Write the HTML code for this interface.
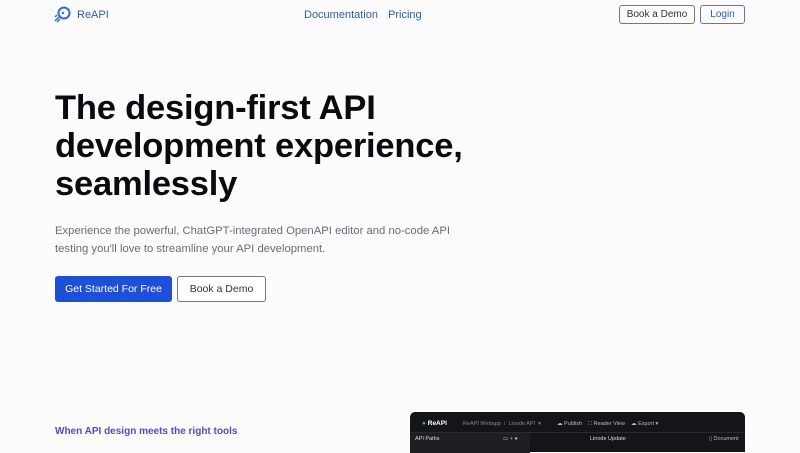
<!DOCTYPE html>
<html><head><style>
*{margin:0;padding:0;box-sizing:border-box}
body{width:800px;height:450px;overflow:hidden;background:#fcfcfd;font-family:"Liberation Sans",sans-serif;position:relative}
.a{position:absolute}
.nav{color:#2f5bb0;font-size:11px}
h1{position:absolute;left:55px;top:89px;font-size:34.5px;line-height:38px;font-weight:600;color:#0b0b0f;letter-spacing:-0.2px}
p{position:absolute;left:55px;top:222px;width:420px;font-size:11.3px;line-height:18px;color:#6b6b75}
.btn{position:absolute;border-radius:3px;font-size:10.5px;display:flex;align-items:center;justify-content:center}
</style></head><body>
<svg class="a" style="left:54px;top:6px" width="17" height="17" viewBox="0 0 17 17"><circle cx="10" cy="7" r="5.5" fill="none" stroke="#2f6fd0" stroke-width="2"/><circle cx="9" cy="7" r="1.2" fill="#2f6fd0"/><path d="M5 11 L1 15 M6 13 L3 16 M3 9 L1 11" stroke="#2f6fd0" stroke-width="1.5"/></svg>
<div class="a nav" style="left:77px;top:9px">ReAPI</div>
<div class="a nav" style="left:304px;top:9px">Documentation</div>
<div class="a nav" style="left:388px;top:9px">Pricing</div>
<div class="btn" style="left:619px;top:5px;width:76px;height:19px;border:1px solid #777;color:#333;font-size:10px">Book a Demo</div>
<div class="btn" style="left:700px;top:5px;width:45px;height:19px;border:1px solid #5a7bb5;color:#2f5bb0;font-size:10px">Login</div>
<h1>The design-first API<br>development experience,<br>seamlessly</h1>
<p>Experience the powerful, ChatGPT-integrated OpenAPI editor and no-code API testing you'll love to streamline your API development.</p>
<div class="btn" style="left:55px;top:276px;width:117px;height:26px;background:#1d4fd8;color:#fff">Get Started For Free</div>
<div class="btn" style="left:177px;top:276px;width:89px;height:26px;border:1px solid #777;background:#fff;color:#333">Book a Demo</div>
<div class="a" style="left:55px;top:426px;font-size:10px;font-weight:600;color:#5b46c8">When API design meets the right tools</div>
<div class="a" style="left:410px;top:412px;width:335px;height:40px;background:#141518;border-radius:5px 5px 0 0;font-size:5.5px;color:#bbb">
 <div class="a" style="left:12px;top:8px;color:#fff;font-weight:bold;font-size:6.5px"><span style="color:#4a9de8">●</span> ReAPI</div>
 <div class="a" style="left:53px;top:9px;color:#888">ReAPI Webapp &nbsp;/&nbsp; Linode API &nbsp;▾</div>
 <div class="a" style="left:147px;top:9px">☁ Publish &nbsp;&nbsp; ⛶ Reader View &nbsp;&nbsp; ☁ Export ▾</div>
 <div class="a" style="left:0;top:20px;width:335px;height:1px;background:#2a2b30"></div>
 <div class="a" style="left:0;top:21px;width:120px;height:20px;background:#1e1f23"></div>
 <div class="a" style="left:5px;top:24px;color:#ddd">API Paths</div>
 <div class="a" style="left:93px;top:24px">▭ + ●</div>
 <div class="a" style="left:180px;top:24px;color:#ddd">Linode Update</div>
 <div class="a" style="left:299px;top:24px">▯ Document</div>
</div>
</body></html>
